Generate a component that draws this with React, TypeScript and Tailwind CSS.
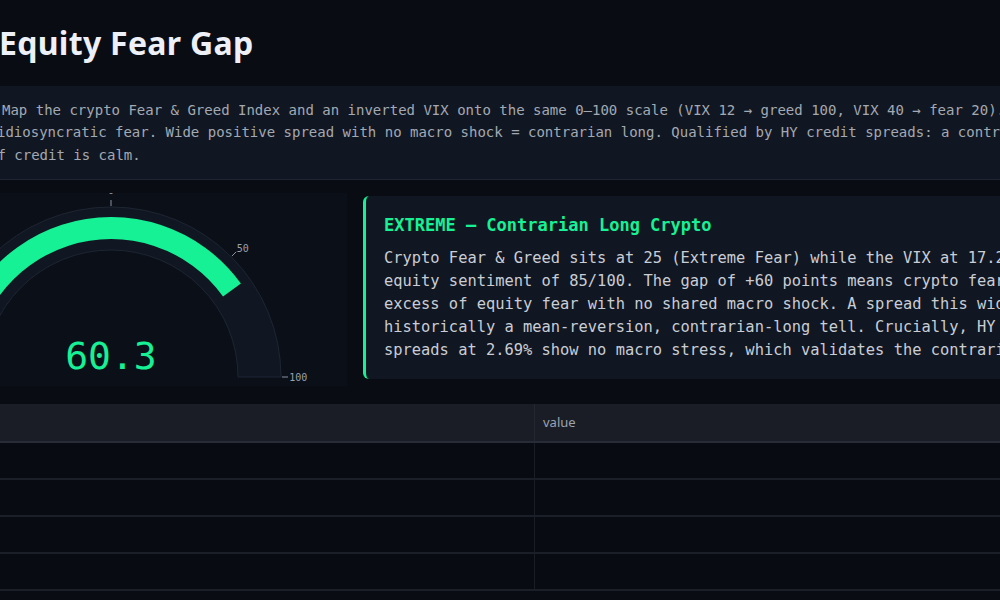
import React from "react";

const GREEN = "#16f196";
const MONO = { fontFamily: '"DejaVu Sans Mono", "Liberation Mono", monospace' };

function Gauge() {
  const cx = 111;
  const cy = 184;
  const ang = (54.27 * Math.PI) / 180;
  const ox = cx + 160 * Math.sin(ang);
  const oy = cy - 160 * Math.cos(ang);
  const ix = cx + 138 * Math.sin(ang);
  const iy = cy - 138 * Math.cos(ang);
  const tick = (deg: number) => {
    const a = (deg * Math.PI) / 180;
    return {
      x1: cx + 171 * Math.sin(a),
      y1: cy - 171 * Math.cos(a),
      x2: cx + 177 * Math.sin(a),
      y2: cy - 177 * Math.cos(a),
    };
  };
  return (
    <svg width="347" height="193" viewBox="0 0 347 193" className="block">
      <path
        d={`M ${cx - 170} ${cy} A 170 170 0 0 1 ${cx + 170} ${cy} L ${cx + 127} ${cy} A 127 127 0 0 0 ${cx - 127} ${cy} Z`}
        fill="#111722"
        stroke="#1e2532"
        strokeWidth="1"
      />
      <path
        d={`M ${cx - 160} ${cy} A 160 160 0 0 1 ${ox} ${oy} L ${ix} ${iy} A 138 138 0 0 0 ${cx - 138} ${cy} Z`}
        fill={GREEN}
      />
      {[-90, -45, 0, 45, 90].map((d) => {
        const t = tick(d);
        return <line key={d} {...t} stroke="#8b93a0" strokeWidth="1" />;
      })}
      <text x={cx} y={1.2} textAnchor="middle" fontSize="10" fill="#9aa1ad" style={MONO}>
        0
      </text>
      <text x={236.7} y={59} fontSize="10" fill="#9aa1ad" style={MONO}>
        50
      </text>
      <text x={289.3} y={187.5} fontSize="10" fill="#9aa1ad" style={MONO}>
        100
      </text>
      <text x={cx} y={176.3} textAnchor="middle" fontSize="38" fill={GREEN} style={MONO}>
        60.3
      </text>
    </svg>
  );
}

export default function App() {
  const bodyLines = [
    "Crypto Fear & Greed sits at 25 (Extreme Fear) while the VIX at 17.20 implies an",
    "equity sentiment of 85/100. The gap of +60 points means crypto fear is running in",
    "excess of equity fear with no shared macro shock. A spread this wide has been",
    "historically a mean-reversion, contrarian-long tell. Crucially, HY credit",
    "spreads at 2.69% show no macro stress, which validates the contrarian read.",
  ];
  return (
    <div className="w-[1000px] h-[600px] overflow-hidden bg-[#090c13] flex flex-col">
      <h1
        className="mt-[25px] text-[32px] leading-[36px] font-bold tracking-[0.3px] text-[#eef0f7] whitespace-nowrap -ml-[1px]"
        style={{ fontFamily: '"Noto Sans", sans-serif' }}
      >
        Equity Fear Gap
      </h1>

      <div
        className="mt-[25px] h-[94px] bg-[#111722] border-b border-[#1d2330] pt-[13px] text-[14px] leading-[22.4px] text-[#a3a9b3] whitespace-nowrap overflow-hidden"
        style={MONO}
      >
        <div className="-ml-[3px]">
          <div className="pl-[5px]">
            Map the crypto Fear &amp; Greed Index and an inverted VIX onto the same 0–100 scale (VIX 12 → greed 100, VIX 40 → fear 20).
          </div>
          <div>
            idiosyncratic fear. Wide positive spread with no macro shock = contrarian long. Qualified by HY credit spreads: a contrarian
          </div>
          <div className="-ml-[8px]">of credit is calm.</div>
        </div>
      </div>

      <div className="mt-[13px] flex items-start">
        <div className="w-[347px] h-[193px] shrink-0 bg-[#0b0f18] overflow-hidden">
          <Gauge />
        </div>
        <div className="ml-[16px] mt-[3px] w-[720px] shrink-0 h-[183px] bg-[#111722] border-l-[3px] border-[#16f196] rounded-md pl-[18px] pt-[17px] overflow-hidden">
          <div
            className="text-[17px] leading-[25px] font-bold text-[#16f196] whitespace-nowrap"
            style={MONO}
          >
            EXTREME — Contrarian Long Crypto
          </div>
          <div
            className="mt-[9px] text-[15.4px] leading-[23px] text-[#c9cdd5] whitespace-nowrap"
            style={MONO}
          >
            {bodyLines.map((l, i) => (
              <div key={i}>{l}</div>
            ))}
          </div>
        </div>
      </div>

      <div className="mt-[18px] w-[1000px]" style={{ fontFamily: '"Noto Sans", sans-serif' }}>
        <div className="flex h-[39px] bg-[#1a1d26] border-b-2 border-[#282c36]">
          <div className="w-[535px] shrink-0 border-r border-[#232731]" />
          <div className="flex-1 flex items-center pl-[8px] text-[13px] text-[#9ca3af]">value</div>
        </div>
        {[0, 1, 2, 3].map((i) => (
          <div key={i} className="flex h-[37px] bg-[#080b11] border-b-2 border-[#1b1f28]">
            <div className="w-[535px] shrink-0 border-r border-[#191d26]" />
            <div className="flex-1" />
          </div>
        ))}
      </div>
    </div>
  );
}
